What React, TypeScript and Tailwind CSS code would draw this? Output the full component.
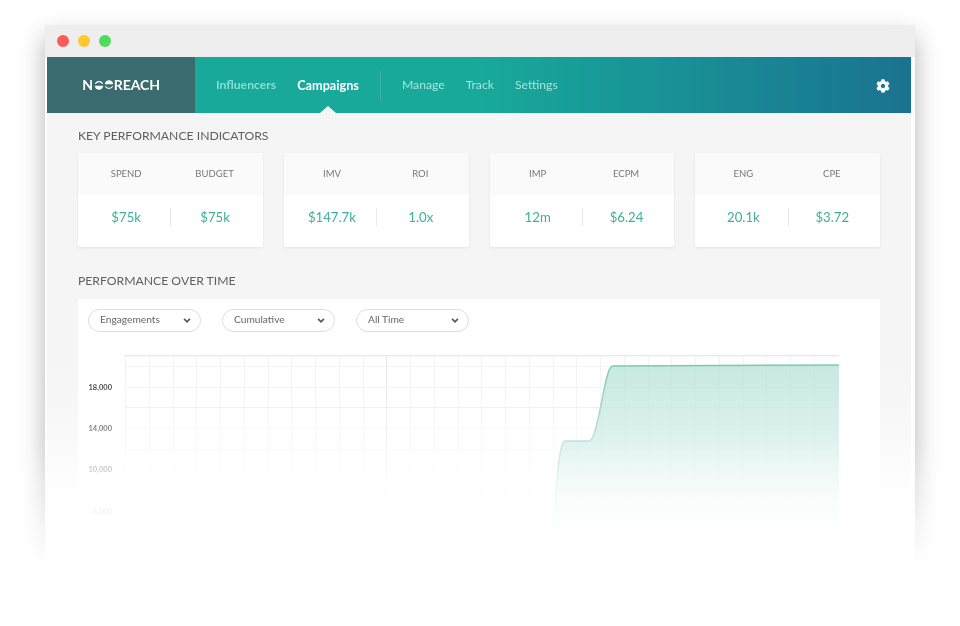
import { FaCog } from 'react-icons/fa';

const kpis = [
  [
    { label: 'SPEND', value: '$75k' },
    { label: 'BUDGET', value: '$75k' },
  ],
  [
    { label: 'IMV', value: '$147.7k' },
    { label: 'ROI', value: '1.0x' },
  ],
  [
    { label: 'IMP', value: '12m' },
    { label: 'ECPM', value: '$6.24' },
  ],
  [
    { label: 'ENG', value: '20.1k' },
    { label: 'CPE', value: '$3.72' },
  ],
];

const filters = ['Engagements', 'Cumulative', 'All Time'];

const yLabels = [
  { text: '18,000', y: 33 },
  { text: '14,000', y: 74 },
  { text: '10,000', y: 115 },
  { text: '6,000', y: 157 },
];

function Logo() {
  return (
    <div className="flex items-center text-[14px] font-bold leading-none tracking-[-0.1px] text-white">
      <span>N</span>
      <svg width="10" height="10" viewBox="0 0 12 12" className="ml-[1px]">
        <path d="M1 6.8a5 5 0 0 0 10 0z" fill="white" />
        <path d="M1.6 4.5a5 5 0 0 1 8.8 0" fill="none" stroke="white" strokeWidth="1.4" />
      </svg>
      <svg width="10" height="10" viewBox="0 0 12 12">
        <path d="M1 5.2a5 5 0 0 1 10 0z" fill="white" />
        <path d="M1.6 7.5a5 5 0 0 0 8.8 0" fill="none" stroke="white" strokeWidth="1.4" />
      </svg>
      <span>REACH</span>
    </div>
  );
}

function Chart() {
  const verticals = Array.from({ length: 30 }, (_, i) => Math.round(125 + i * 23.75) + 0.5);
  const horizontals = Array.from({ length: 10 }, (_, i) => Math.round(11 + i * 20.7) + 0.5);
  return (
    <svg width="802" height="260" viewBox="78 355 802 260" className="block">
      <defs>
        <linearGradient id="area" x1="0" y1="0" x2="0" y2="1">
          <stop offset="0" stopColor="#a5dccd" stopOpacity="0.62" />
          <stop offset="1" stopColor="#a5dccd" stopOpacity="0.75" />
        </linearGradient>
      </defs>
      <g transform="translate(0 355)">
        {verticals.map((x, i) => (
          <line key={x} x1={x} x2={x} y1={0} y2={200} stroke={i === 11 ? '#e6e6e6' : '#f2f2f2'} />
        ))}
        {horizontals.map((y, i) => (
          <line key={y} x1={125} x2={839} y1={y} y2={y} stroke={i === 2 ? '#ebebeb' : '#f3f3f3'} />
        ))}
        <line x1={125} x2={839} y1={0.5} y2={0.5} stroke="#e6e6e6" strokeWidth="1.5" />
        <path
          d="M552 200 C556 130 559 86 565 86 L589 86 C594 86 597 68 601 50 C605 30 608 11 613 11 L839 10 L839 200 Z"
          fill="url(#area)"
        />
        <path
          d="M552 200 C556 130 559 86 565 86 L589 86 C594 86 597 68 601 50 C605 30 608 11 613 11 L839 10"
          fill="none"
          stroke="#7fcab6"
          strokeWidth="1.5"
        />
      </g>
    </svg>
  );
}

export default function App() {
  return (
    <div className="relative h-[626px] w-[960px] overflow-hidden bg-white pt-[25px] pl-[45px] font-['Lato',sans-serif] blur-[0.4px]">
      {/* Browser window */}
      <div className="relative h-[570px] w-[870px] bg-white shadow-[0_12px_24px_rgba(0,0,0,0.3)]">
        <div className="flex h-[32px] items-center gap-[9px] bg-[#eeeeee] pl-[12px]">
          <span className="h-3 w-3 rounded-full bg-[#fc5b57]" />
          <span className="h-3 w-3 rounded-full bg-[#fdc92e]" />
          <span className="h-3 w-3 rounded-full bg-[#4fdc5c]" />
        </div>

        <div className="ml-[2px] mr-[4px] h-[498px] overflow-hidden bg-[#f5f5f5]">
          {/* Nav */}
          <div className="flex h-[56px] items-stretch bg-gradient-to-r from-[#18a99a] via-[#18a99a] to-[#1a7390]">
            <div className="flex w-[148px] items-center justify-center bg-[#3a6b6e]">
              <Logo />
            </div>
            <div className="flex flex-1 items-center pl-[21px] pr-[21px] pt-[1px] text-[12.2px]">
              <span className="font-bold text-[#85dfd3]">Influencers</span>
              <span className="relative ml-[21px] flex h-full items-center text-[12.7px] font-bold text-white">
                Campaigns
                <span className="absolute bottom-0 left-1/2 h-0 w-0 -translate-x-1/2 border-x-[8px] border-b-[7px] border-x-transparent border-b-[#f5f5f5]" />
              </span>
              <span className="ml-[21px] mr-[21px] h-[30px] w-px bg-white/15" />
              <span className="text-[#a3e6dc]">Manage</span>
              <span className="ml-[21px] text-[#a3e6dc]">Track</span>
              <span className="ml-[21px] text-[#a3e6dc]">Settings</span>
              <FaCog className="ml-auto h-[14px] w-[14px] text-white" />
            </div>
          </div>

          {/* Content */}
          <div className="pl-[31px] pr-[31px] pt-[15px]">
            <h2 className="text-[12.2px] leading-[15px] text-[#5f5f5f]">KEY PERFORMANCE INDICATORS</h2>

            <div className="mt-[10px] grid grid-cols-4 gap-[21px]">
              {kpis.map((pair) => (
                <div key={pair[0].label} className="h-[94px] rounded-[2px] bg-white shadow-[0_1px_3px_rgba(0,0,0,0.08)]">
                  <div className="grid h-[42px] grid-cols-2 items-center rounded-t-[2px] bg-[#fafafa] px-[4px] pt-[1px] text-center text-[9.5px] text-[#777777]">
                    {pair.map((k) => (
                      <span key={k.label}>{k.label}</span>
                    ))}
                  </div>
                  <div className="mt-[13px] grid grid-cols-2 px-[4px] text-center text-[13.2px] leading-[18px] text-[#3fae9b]">
                    {pair.map((k, i) => (
                      <span key={k.label} className={i === 1 ? 'border-l border-[#e8e8e8]' : ''}>
                        {k.value}
                      </span>
                    ))}
                  </div>
                </div>
              ))}
            </div>

            <h2 className="mt-[26px] text-[12.2px] leading-[15px] text-[#5f5f5f]">PERFORMANCE OVER TIME</h2>

            <div className="mt-[11px] bg-white">
              <div className="flex gap-[21px] px-[10px] pt-[10px]">
                {filters.map((f) => (
                  <div
                    key={f}
                    className="flex h-[23px] w-[113px] items-center justify-between rounded-full border border-[#dddddd] bg-white pb-[1px] pl-[11px] pr-[9px] text-[10.2px] text-[#666666]"
                  >
                    {f}
                    <svg width="8" height="5" viewBox="0 0 9 6">
                      <path d="M1 1l3.5 3.5L8 1" fill="none" stroke="#555555" strokeWidth="2" />
                    </svg>
                  </div>
                ))}
              </div>

              <div className="relative mt-[23px]">
                <Chart />
                {yLabels.map((l) => (
                  <span
                    key={l.text}
                    className="absolute right-[768px] -translate-y-1/2 text-[7.5px] font-bold text-[#333333]"
                    style={{ top: l.y }}
                  >
                    {l.text}
                  </span>
                ))}
              </div>
            </div>
          </div>
        </div>

        {/* Fade inside the window, leaves the outer shadow alone */}
        <div className="absolute inset-x-0 bottom-0 top-[340px] bg-gradient-to-b from-white/0 via-white/80 via-[56%] to-white to-[78%]" />
      </div>

      {/* Fade that swallows the foot of the window and its shadow */}
      <div className="absolute inset-x-0 bottom-0 top-[440px] bg-gradient-to-b from-white/0 to-white to-[67%]" />
    </div>
  );
}
